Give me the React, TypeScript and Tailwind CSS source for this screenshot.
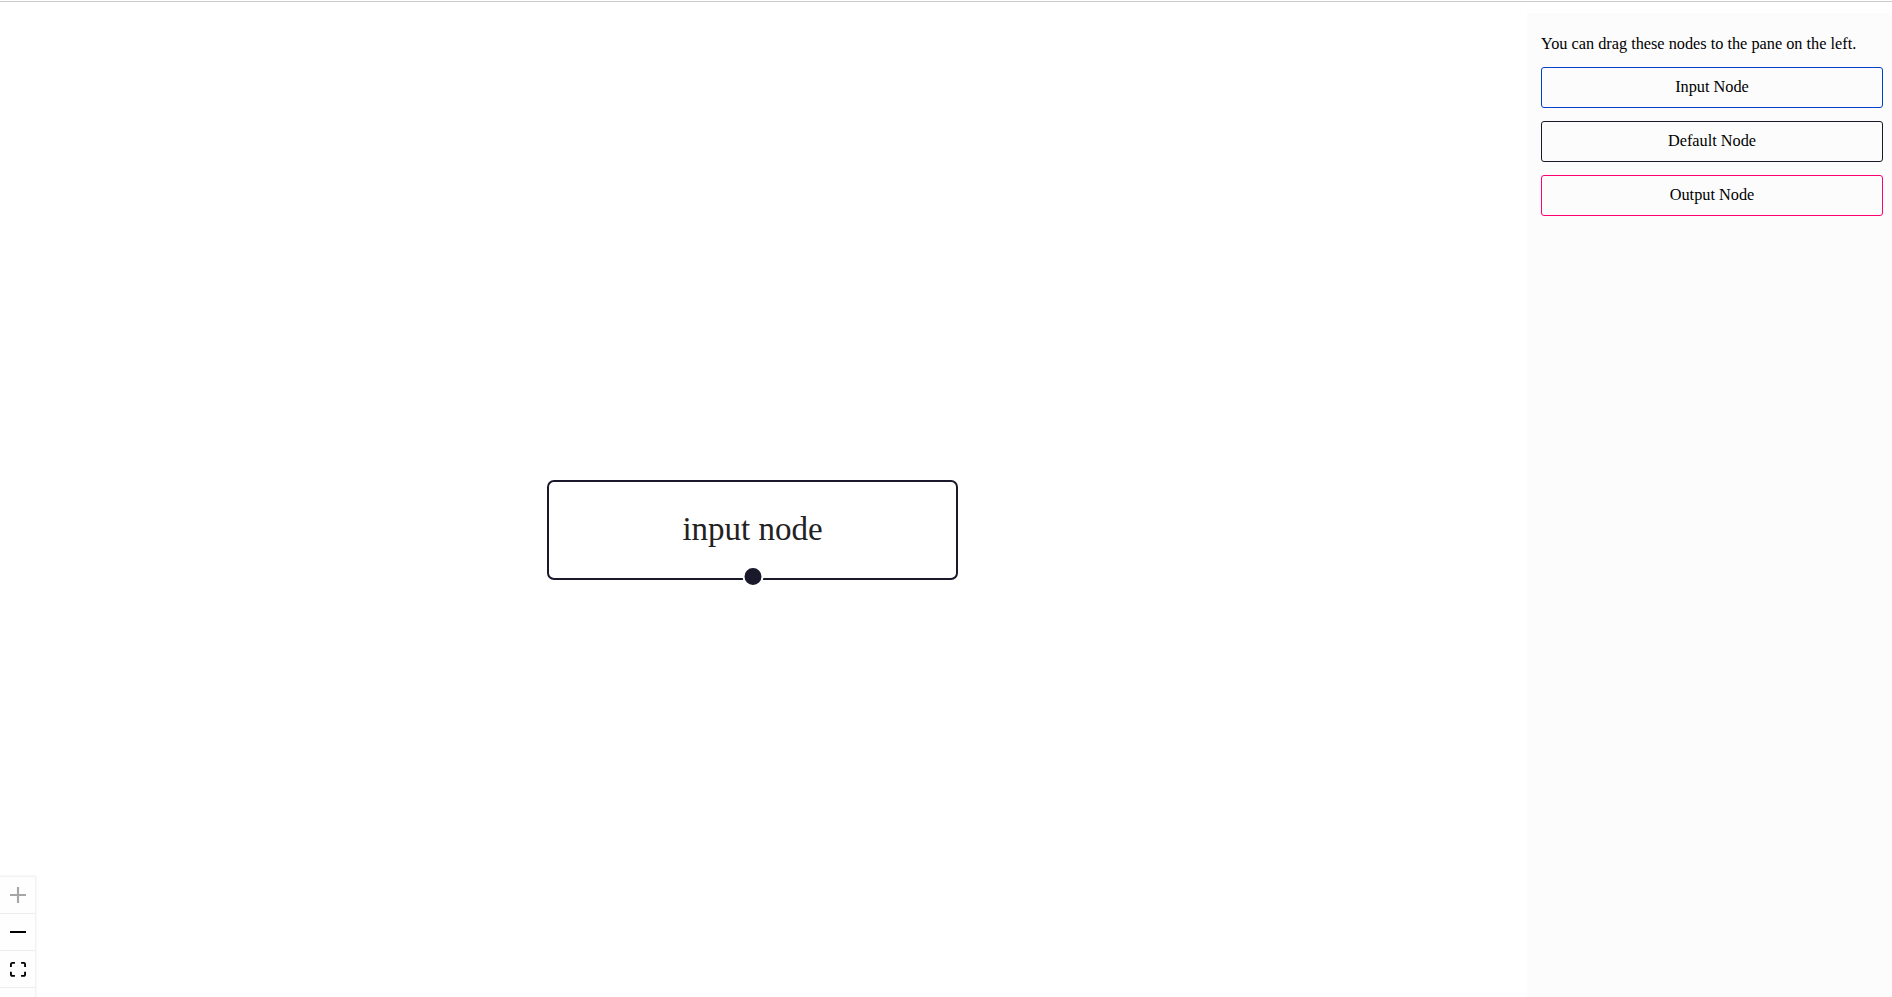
const nodeTypes = [
  { label: "Input Node", border: "border-[#0041d0]" },
  { label: "Default Node", border: "border-[#1a192b]" },
  { label: "Output Node", border: "border-[#ff0072]" },
];

function PlusIcon() {
  return (
    <svg viewBox="0 0 32 32" className="h-4 w-4 fill-[#a6a6a6]">
      <path d="M32 18.133H18.133V32h-4.266V18.133H0v-4.266h13.867V0h4.266v13.867H32z" />
    </svg>
  );
}

function MinusIcon() {
  return (
    <svg viewBox="0 0 32 5" className="w-4 fill-black">
      <path d="M0 0h32v4.2H0z" />
    </svg>
  );
}

function FitIcon() {
  return (
    <svg viewBox="0 0 32 30" className="w-4 fill-black">
      <path d="M3.692 4.63c0-.53.4-.938.939-.938h5.215V0H4.708C2.13 0 0 2.054 0 4.63v5.216h3.692V4.631zM27.354 0h-5.2v3.692h5.17c.53 0 .984.4.984.939v5.215H32V4.631A4.624 4.624 0 0027.354 0zm.954 24.83c0 .532-.4.94-.939.94h-5.215v3.768h5.215c2.577 0 4.631-2.13 4.631-4.707v-5.139h-3.692v5.139zm-23.677.94c-.531 0-.939-.4-.939-.94v-5.138H0v5.139c0 2.577 2.13 4.707 4.708 4.707h5.138V25.77H4.631z" />
    </svg>
  );
}

// the fourth (lock) button sits below the fold
function EmptyIcon() {
  return <span className="h-4 w-4" />;
}

const controls = [PlusIcon, MinusIcon, FitIcon, EmptyIcon];

export default function App() {
  return (
    <div className="relative h-[997px] overflow-hidden bg-white font-['Liberation_Serif',serif] text-black">
      <div className="mt-px h-px bg-[#cccccc]" />

      <div className="flex h-[995px]">
        {/* flow pane */}
        <div className="relative flex-1">
          <div className="absolute left-[547px] top-[478px] flex h-[100px] w-[411px] items-center justify-center rounded-[7px] border-2 border-[#1a192b] bg-white text-[33px] text-[#222]">
            input node
            <span className="absolute bottom-[-9px] left-1/2 h-[21px] w-[21px] -translate-x-1/2 rounded-full border-2 border-white bg-[#1a192b]" />
          </div>

          <div className="absolute left-0 top-[875px] flex w-[35px] flex-col bg-[#fefefe] shadow-[0_0_2px_1px_rgba(0,0,0,0.08)]">
            {controls.map((Icon, i) => (
              <button
                key={i}
                className="flex h-[37px] w-[35px] items-center justify-center border-b border-[#eeeeee]"
              >
                <Icon />
              </button>
            ))}
          </div>
        </div>

        {/* sidebar */}
        <aside className="mt-[11px] w-[365px] bg-[#fcfcfc] pl-[14px] pr-[9px] pt-[21px] text-[16.3px]">
          <div className="mb-[14px] leading-[19px]">
            You can drag these nodes to the pane on the left.
          </div>
          {nodeTypes.map((n) => (
            <div
              key={n.label}
              className={`mb-[13px] flex h-[41px] cursor-grab items-center justify-center rounded-[3px] border bg-[#fcfcfc] ${n.border}`}
            >
              {n.label}
            </div>
          ))}
        </aside>
      </div>
    </div>
  );
}
